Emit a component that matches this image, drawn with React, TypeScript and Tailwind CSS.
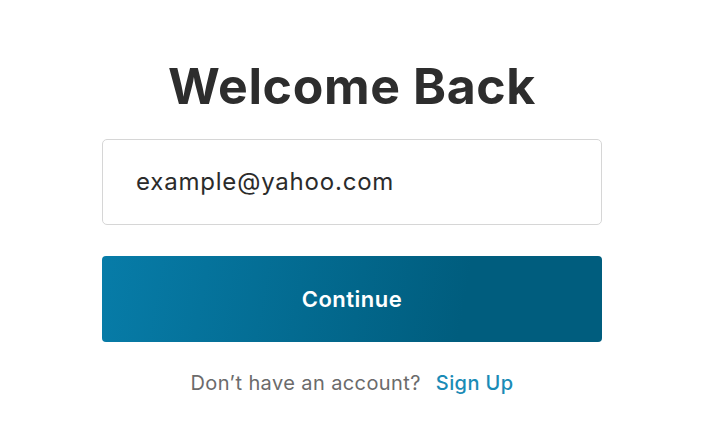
export default function App() {
  return (
    <div className="min-h-screen bg-white flex flex-col items-center pt-[54px] pr-[22px] font-['Inter','Liberation_Sans',sans-serif]">
      {/* Heading */}
      <h1 className="text-[50px] leading-[64px] font-bold text-[#2d2d2d] tracking-[0.6px]">
        Welcome Back
      </h1>

      {/* Email field */}
      <div className="mt-[21px] w-[500px] h-[86px] border border-[#d6d6d6] rounded-[5px] flex items-center px-[33px]">
        <span className="text-[24px] tracking-[0.8px] text-[#2b2b2b]">example@yahoo.com</span>
      </div>

      {/* Continue */}
      <button className="mt-[31px] w-[500px] h-[86px] rounded-[4px] bg-[linear-gradient(100deg,#077ca8_0%,#005d7e_72%)] text-white text-[22px] tracking-[0.5px] font-semibold">
        Continue
      </button>

      {/* Sign up */}
      <p className="mt-[26px] text-[20px] tracking-[0.4px] text-[#6b6b6b]">
        Don’t have an account?
        <a className="ml-[15px] text-[#1a8bb6] font-medium">Sign Up</a>
      </p>
    </div>
  );
}
